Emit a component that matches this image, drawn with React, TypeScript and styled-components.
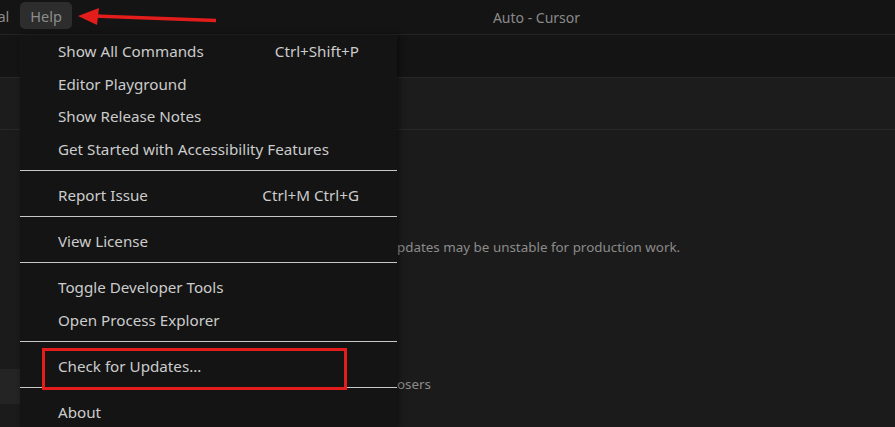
import React from "react";
import styled, { createGlobalStyle } from "styled-components";

const GlobalStyle = createGlobalStyle`
  html, body {
    margin: 0;
    padding: 0;
    background: #1b1b1b;
  }
  * {
    box-sizing: border-box;
  }
`;

const Window = styled.div`
  position: relative;
  width: 895px;
  height: 427px;
  overflow: hidden;
  display: flex;
  flex-direction: column;
  background: #1b1b1b;
  font-family: "Noto Sans", "Open Sans", sans-serif;
`;

const TitleBar = styled.div`
  height: 35px;
  flex: none;
  display: flex;
  align-items: center;
  background: #141414;
  border-bottom: 1px solid #242424;
  position: relative;
`;

const MenuTitles = styled.div`
  display: flex;
  align-items: center;
  height: 100%;
  margin-left: -60px;
  gap: 1px;
`;

const MenuTitle = styled.div<{ $active?: boolean }>`
  height: 27px;
  margin-top: -3px;
  padding: 0 10px;
  display: flex;
  align-items: center;
  border-radius: 5px;
  font-size: 14.5px;
  color: #8c8c8c;
  background: ${(p) => (p.$active ? "#2d2d2d" : "transparent")};
`;

const WindowTitle = styled.div`
  position: absolute;
  left: 0;
  right: 0;
  top: 0;
  height: 34px;
  display: flex;
  align-items: center;
  justify-content: center;
  padding-left: 178px;
  font-size: 14px;
  color: #8a8a8a;
  pointer-events: none;
`;

const TabStrip = styled.div`
  height: 43px;
  flex: none;
  background: #141414;
  border-bottom: 1px solid #282828;
`;

const EditorHeader = styled.div`
  height: 52px;
  flex: none;
  background: #1c1c1c;
  border-bottom: 1px solid #282828;
`;

const Content = styled.div`
  flex: 1;
  display: flex;
  background: #1b1b1b;
`;

const SideGutter = styled.div`
  width: 20px;
  flex: none;
  display: flex;
  flex-direction: column;
  padding-top: 239px;
`;

const SideButton = styled.div`
  height: 35px;
  width: 20px;
  background: #242424;
`;

const Settings = styled.div`
  flex: 1;
  padding-left: 377px;
  padding-top: 108px;
  display: flex;
  flex-direction: column;
`;

const SettingText = styled.div<{ $gap?: number }>`
  font-size: 13.4px;
  line-height: 18px;
  color: #8b8b8b;
  margin-top: ${(p) => p.$gap ?? 0}px;
`;

const Menu = styled.div`
  position: absolute;
  left: 20px;
  top: 35px;
  width: 377px;
  background: #141414;
  box-shadow: 2px 0 6px rgba(0, 0, 0, 0.45);
  display: flex;
  flex-direction: column;
`;

const Item = styled.div`
  height: 32.6px;
  display: flex;
  align-items: center;
  justify-content: space-between;
  padding: 0 38px 0 38px;
  font-size: 15.2px;
  color: #cccccc;
  white-space: nowrap;
`;

const Shortcut = styled.span`
  color: #cccccc;
`;

const Separator = styled.div`
  height: 1px;
  margin: 4.6px 0 7.8px;
  background: #c8c8c8;
`;

const Highlight = styled.div`
  position: absolute;
  left: 42px;
  top: 348px;
  width: 305px;
  height: 42px;
  border: 3px solid #e31c1c;
`;

const Arrow = styled.svg`
  position: absolute;
  left: 76px;
  top: 6px;
`;

type Entry = { label: string; key?: string } | "sep";

const entries: Entry[] = [
  { label: "Show All Commands", key: "Ctrl+Shift+P" },
  { label: "Editor Playground" },
  { label: "Show Release Notes" },
  { label: "Get Started with Accessibility Features" },
  "sep",
  { label: "Report Issue", key: "Ctrl+M Ctrl+G" },
  "sep",
  { label: "View License" },
  "sep",
  { label: "Toggle Developer Tools" },
  { label: "Open Process Explorer" },
  "sep",
  { label: "Check for Updates..." },
  "sep",
  { label: "About" },
];

export default function App() {
  return (
    <>
      <GlobalStyle />
      <Window>
        <TitleBar>
          <MenuTitles>
            <MenuTitle>Terminal</MenuTitle>
            <MenuTitle $active>Help</MenuTitle>
          </MenuTitles>
          <WindowTitle>Auto - Cursor</WindowTitle>
        </TitleBar>
        <TabStrip />
        <EditorHeader />
        <Content>
          <SideGutter>
            <SideButton />
          </SideGutter>
          <Settings>
            <SettingText>pdates may be unstable for production work.</SettingText>
            <SettingText $gap={119}>osers</SettingText>
          </Settings>
        </Content>

        <Menu>
          {entries.map((e, i) =>
            e === "sep" ? (
              <Separator key={i} />
            ) : (
              <Item key={i}>
                <span>{e.label}</span>
                {e.key && <Shortcut>{e.key}</Shortcut>}
              </Item>
            )
          )}
        </Menu>

        <Highlight />
        <Arrow width="142" height="22" viewBox="0 0 142 22">
          <line x1="18" y1="10" x2="140" y2="14.5" stroke="#e31c1c" strokeWidth="3.5" />
          <polygon points="2,10 23,2 21,19" fill="#e31c1c" />
        </Arrow>
      </Window>
    </>
  );
}
